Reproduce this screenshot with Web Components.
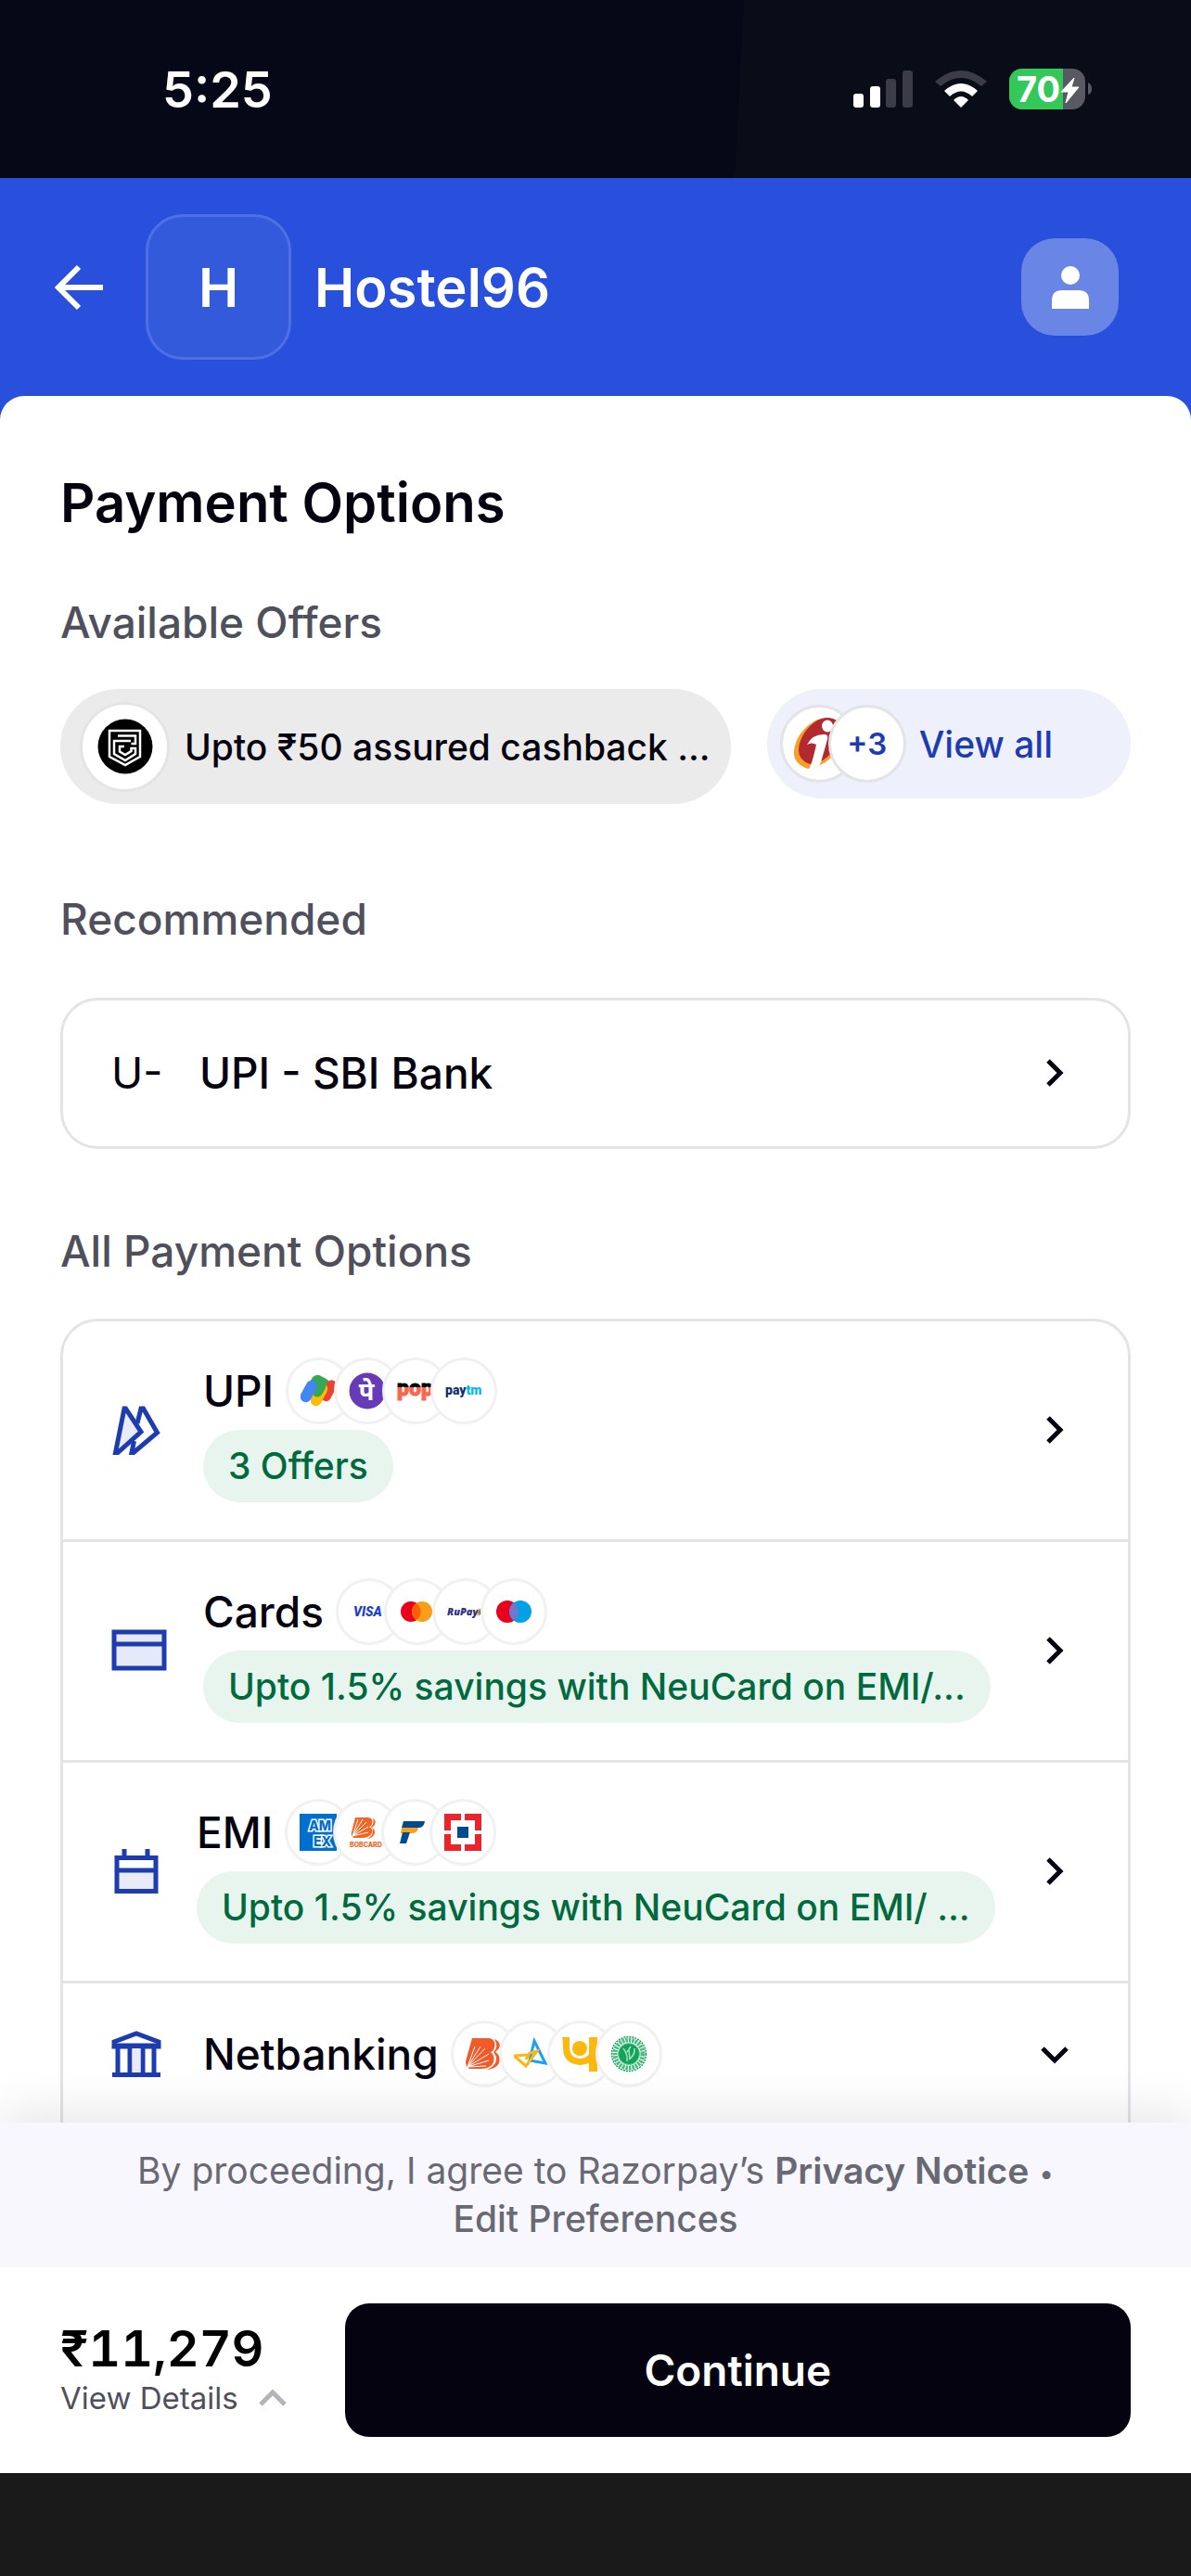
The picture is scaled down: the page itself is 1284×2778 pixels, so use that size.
<!DOCTYPE html>
<html lang="en">
<head>
<meta charset="utf-8">
<meta name="viewport" content="width=device-width, initial-scale=1">
<title>Hostel96 - Payment Options</title>
<style>
  :root {
    --text-title: 58px;
    --text-label: 46px;
    --text-body: 39px;
    --text-small: 33px;
    --gutter: 65px;
    --ink: #05030f;
    --muted: #50505c;
    --line: #e4e4e6;
    --blue: #1d3cb0;
    --brand: #2950dc;
  }
  body {
    margin: 0;
    font-family: Inter, "Liberation Sans", sans-serif;
    color: var(--ink);
  }
</style>
</head>
<body>
<checkout-page>
  <status-bar slot="top">5:25</status-bar>
  <merchant-header slot="top" initial="H">Hostel96</merchant-header>

  <section-block heading="Available Offers">
    <offer-row></offer-row>
  </section-block>

  <section-block class="recommended" heading="Recommended">
    <option-list>
      <payment-option class="compact" name="UPI - SBI Bank">
        <span slot="icon">U-</span>
      </payment-option>
    </option-list>
  </section-block>

  <section-block class="all" heading="All Payment Options">
    <option-list>
      <payment-option name="UPI" offer="3 Offers" brands="gpay phonepe pop paytm">
        <svg-icon slot="icon" name="upi"></svg-icon>
      </payment-option>
      <payment-option name="Cards" offer="Upto 1.5% savings with NeuCard on EMI/..." brands="visa mastercard rupay maestro">
        <svg-icon slot="icon" name="card"></svg-icon>
      </payment-option>
      <payment-option class="narrow" name="EMI" offer="Upto 1.5% savings with NeuCard on EMI/ ..." brands="amex bobcard federal hdfc">
        <svg-icon slot="icon" name="calendar"></svg-icon>
      </payment-option>
      <payment-option name="Netbanking" brands="bob airtel pnb seal" expandable>
        <svg-icon slot="icon" name="bank"></svg-icon>
      </payment-option>
    </option-list>
  </section-block>

  <consent-note slot="bottom"></consent-note>
  <pay-footer slot="bottom" amount="₹11,279">Continue</pay-footer>
</checkout-page>

<script>
// Every icon: [width, height, svg content]
const icons = {
  signal: [64, 40, `
    <rect x="0" y="25" width="11" height="15" rx="3" fill="#fff"/>
    <rect x="18" y="17" width="11" height="23" rx="3" fill="#fff"/>
    <rect x="35" y="9" width="11" height="31" rx="3" fill="#3b3c48"/>
    <rect x="53" y="0" width="11" height="40" rx="3" fill="#3b3c48"/>`],
  wifi: [56, 40, `
    <path d="M0 12Q28 -12 56 12L50 17Q28 -1 6 17Z" fill="#3b3c48"/>
    <path d="M10 22Q28 6 46 22L40 28Q28 17 16 28Z" fill="#fff"/>
    <path d="M20 32Q28 24 36 32L28 40Z" fill="#fff"/>`],
  battery: [90, 44, `
    <clipPath id="cell"><rect width="82" height="44" rx="14"/></clipPath>
    <g clip-path="url(#cell)"><rect width="82" height="44" fill="#585963"/><rect width="58" height="44" fill="#34c759"/></g>
    <path d="M85 15Q89 17 89 22T85 28Z" fill="#585963"/>
    <text x="8" y="36" font-family="Inter, sans-serif" font-weight="700" font-size="38" fill="#fff">70</text>
    <path d="M70 10L56 25H64L61 37L75 20H67Z" fill="#fff" stroke="#fff"/>`],
  back: [54, 52, `<path d="M53 26H6M27 4L5 26L27 48" fill="none" stroke="#fff" stroke-width="6"/>`],
  user: [40, 48, `<circle cx="20" cy="11" r="10" fill="#fff"/><path d="M0 47V38Q0 27 11 27H29Q40 27 40 38V47Z" fill="#fff"/>`],
  right: [48, 48, `<path d="M17 11L30 24L17 37" fill="none" stroke="#05030f" stroke-width="5"/>`],
  down: [48, 48, `<path d="M11 18L24 31L37 18" fill="none" stroke="#05030f" stroke-width="5"/>`],
  up: [30, 20, `<path d="M2 17L15 4L28 17" fill="none" stroke="#b4b4b8" stroke-width="5"/>`],
  upi: [54, 54, `
    <path d="M28 20L32 4H34.500L49.500 30L24 51.500H22L24.500 39" fill="none" stroke="#1d3cb0" stroke-width="5"/>
    <path d="M14 4H15.500L32 29L7 51.500H4.500Z" fill="#e9ebf8" stroke="#1d3cb0" stroke-width="5"/>`],
  card: [60, 46, `<rect x="3" y="3" width="54" height="39" fill="#e6e9f7" stroke="#1d3cb0" stroke-width="5"/><path d="M3 16H57" stroke="#1d3cb0" stroke-width="5"/>`],
  calendar: [54, 54, `
    <path d="M6 26H48V48H6Z" fill="#e9ebf8"/>
    <path d="M6 12.500H48V48.500H6ZM6 26H48M14 3V12M39 3V12" fill="none" stroke="#1d3cb0" stroke-width="5"/>`],
  bank: [54, 52, `
    <path d="M3 18V13L27 4L51 13V18Z" fill="#fff" stroke="#1d3cb0" stroke-width="5"/>
    <path d="M1 17H53M1 48.500H53" stroke="#1d3cb0" stroke-width="5"/>
    <path d="M7 18V47M20 18V47M34 18V47M46 18V47" stroke="#1d3cb0" stroke-width="5"/>
    <path d="M22.500 20H31.500V46H22.500Z" fill="#e9ebf8"/>`],

  cred: [60, 60, `
    <circle cx="30" cy="30" r="29.500" fill="#000"/>
    <g fill="none" stroke="#fff" stroke-width="2.500">
      <path d="M13 13H46V41L30 50L13 41Z"/>
      <path d="M22 18.500H41V27H36.500"/>
      <path d="M36 24H18V38L30 45L41 38V32H36.500V35L30 39L24 35.500V30H29"/>
    </g>`],
  icici: [60, 60, `
    <path d="M38 2C20 3 3 22 3 40Q3 52 18 57L31 53Q44 48 49 34L50 8Q46 2 38 2Z" fill="#f99d27"/>
    <path d="M38 2C23 3 8 22 8 37Q8 48 20 52L34 48Q44 42 52 26L50 6Q46 2 38 2Z" fill="#b02a30"/>
    <ellipse cx="39" cy="11" rx="6" ry="6.500" fill="#fff"/>
    <path d="M17 31Q23 19 37 20Q41 21 38 29L32 50Q30 56 19 58Q23 50 27 31Q22 28 17 31Z" fill="#fff"/>`],

  gpay: [40, 40, `
    <rect x="10" y="4" width="21" height="18" rx="7" transform="rotate(28 20 13)" fill="#34a853"/>
    <rect x="25" y="8" width="11" height="24" rx="5" transform="rotate(28 31 20)" fill="#ea4335"/>
    <rect x="14" y="11" width="12" height="26" rx="6" transform="rotate(28 20 24)" fill="#fbbc04"/>
    <rect x="14" y="8" width="12" height="19" rx="6" transform="rotate(28 20 17)" fill="#34a853"/>
    <rect x="3" y="8" width="12" height="25" rx="6" transform="rotate(28 9 20)" fill="#4285f4"/>`],
  phonepe: [40, 40, `
    <circle cx="20" cy="20" r="19.500" fill="#673ab7"/>
    <text x="19" y="30" text-anchor="middle" font-family="Noto Sans, sans-serif" font-weight="700" font-size="27" fill="#fff">पे</text>`],
  pop: [40, 40, `
    <linearGradient id="two" gradientUnits="userSpaceOnUse" x1="0" y1="0" x2="0" y2="40"><stop offset=".4" stop-color="#000"/><stop offset=".4" stop-color="#f9654f"/></linearGradient>
    <text x="0" y="25" font-family="Roboto, sans-serif" font-weight="900" font-size="23" fill="url(#two)" stroke="url(#two)" stroke-width="1">pop</text>`],
  paytm: [40, 40, `<text x="0" y="24" font-family="Roboto, sans-serif" font-weight="900" font-size="14" fill="#0f2f70">pay<tspan fill="#00b9f5">tm</tspan></text>`],
  visa: [40, 40, `<text x="3" y="25" font-family="Roboto, sans-serif" font-weight="900" font-style="italic" font-size="14" fill="#1d3fd1">VISA</text>`],
  mastercard: [40, 40, `
    <circle cx="13" cy="20" r="11" fill="#eb001b"/><circle cx="25" cy="20" r="11" fill="#f79e1b"/>
    <path d="M19 11A11 11 0 0 1 19 29A11 11 0 0 1 19 11Z" fill="#ff5f00"/>`],
  rupay: [40, 40, `
    <text x="0" y="24" font-family="Open Sans, sans-serif" font-weight="800" font-style="italic" font-size="11" fill="#302f80">RuPay</text>
    <path d="M34 16L36 20L32 25Z" fill="#f47b20"/><path d="M36 16L38 20L34 25Z" fill="#00854a"/>`],
  maestro: [40, 40, `
    <circle cx="13" cy="20" r="12" fill="#eb001b"/><circle cx="27" cy="20" r="12" fill="#00a2e5"/>
    <path d="M20 10.300A12 12 0 0 1 20 29.700A12 12 0 0 1 20 10.300Z" fill="#7375cf"/>`],
  amex: [40, 40, `
    <rect width="40" height="40" fill="#016fd0"/>
    <g font-family="Inter, sans-serif" font-weight="800" font-size="14" fill="#016fd0" stroke="#fff" stroke-width="3" paint-order="stroke"><text x="10" y="18">AM</text><text x="15" y="35">EX</text></g>`],
  bobcard: [40, 40, `
    <path d="M8 4H22Q28 5 26 11Q25 14 23 14Q28 17 26 21Q23 26 15 26H7Q3 25 4 20Z" fill="#f26522"/>
    <path d="M27 5Q31 7 29 12L26 15Q31 18 28 23Q26 26 21 27Q28 23 27 17L25 14Q29 10 27 5Z" fill="#f26522"/>
    <path d="M5 24L11 6M5 24L16 6M5 24L20 9M5 24L22 14M5 24L22 20" stroke="#fff" stroke-width="1"/>
    <text x="2" y="36" font-family="Inter, sans-serif" font-weight="800" font-size="7" fill="#f26522">BOBCARD</text>`],
  federal: [40, 40, `
    <path d="M8 8H31Q30 15 25 15H6Z" fill="#004b8d"/>
    <path d="M6 15H24Q23 21 17 21H5Z" fill="#faa21b"/>
    <path d="M7 20H15L11 32H4Z" fill="#004b8d"/>`],
  hdfc: [40, 40, `
    <rect width="40" height="40" fill="#ed232a"/><rect x="7" y="7" width="26" height="26" fill="#fff"/>
    <path d="M20 0V40M0 20H40" stroke="#fff" stroke-width="4"/>
    <rect x="14" y="14" width="12" height="12" fill="#004c8f"/>`],
  bob: [40, 40, `
    <path d="M7 3H26Q33 5 31 13Q30 17 27 18Q32 22 30 29Q27 36 17 36H4Q0 34 0 28Z" fill="#f15a29"/>
    <path d="M31 4Q39 7 36 14L32 18Q39 22 36 30Q32 37 22 37Q34 33 33 23L30 18Q36 12 31 4Z" fill="#f15a29"/>
    <path d="M2 34L10 12M2 34L16 12M2 34L21 14M2 34L25 20M2 34L25 27M2 34L22 33" stroke="#fff" stroke-width="1"/>`],
  airtel: [40, 40, `
    <path d="M22 6L34 30L17 27Z" fill="none" stroke="#1ba1f2" stroke-width="3"/>
    <path d="M15 21L0 22L13 33L25 17L17 19L13 26" fill="none" stroke="#fbb615" stroke-width="3"/>`],
  pnb: [40, 40, `
    <circle cx="19" cy="14" r="8" fill="#fbb90f"/>
    <path d="M0 2H8V14Q9 25 19 25Q26 25 29 20V2H38V39H29V30Q24 32 19 32Q1 30 1 14Q1 5 0 2Z" fill="#fbb90f"/>`],
  seal: [40, 40, `
    <circle cx="20" cy="20" r="18.500" fill="none" stroke="#12a45a" stroke-width="1.500" stroke-dasharray="2 1"/>
    <circle cx="20" cy="20" r="15" fill="none" stroke="#4dba82" stroke-width="5" stroke-dasharray="2.500 1"/>
    <circle cx="20" cy="20" r="11.500" fill="#12a45a" stroke="#7acca0" stroke-width="1"/>
    <path d="M14 14Q19 20 18 28M18 18L22 12M20 26Q27 21 26 14M20 16L21 26" fill="none" stroke="#a8e0c4" stroke-width="1.500"/>`],
};

/** Shared base: clones the class's markup into an open shadow root */
class BaseElement extends HTMLElement {
  connectedCallback() {
    const template = document.createElement("template");
    template.innerHTML = `<style>* { box-sizing: border-box; } ${this.css()}</style>${this.html()}`;
    this.attachShadow({ mode: "open" });
    this.shadowRoot.appendChild(template.content.cloneNode(true));
  }
}

class SvgIcon extends BaseElement {
  css() {
    return `:host { display: inline-flex; flex: none; } svg { display: block; }`;
  }
  html() {
    const [w, h, body] = icons[this.getAttribute("name")];
    return `<svg width="${w}" height="${h}" viewBox="0 0 ${w} ${h}" aria-hidden="true">${body}</svg>`;
  }
}

class CheckoutPage extends BaseElement {
  css() {
    return `
      :host { display: flex; flex-direction: column; height: 100vh; background: #1a1a1a; }
      .top { background: var(--brand); flex: none; }
      .sheet-wrap { background: linear-gradient(var(--brand) 50px, #fff 50px); flex: 1; min-height: 0; overflow: hidden; }
      main { background: #fff; border-radius: 26px 26px 0 0; padding: 79px var(--gutter) 0; }
      h1 { margin: 0 0 65px; font-size: var(--text-title); line-height: 72px; font-weight: 600; }
      .bottom { flex: none; position: relative; margin-bottom: 111px; }`;
  }
  html() {
    return `
      <div class="top"><slot name="top"></slot></div>
      <div class="sheet-wrap"><main><h1>Payment Options</h1><slot></slot></main></div>
      <div class="bottom"><slot name="bottom"></slot></div>`;
  }
}

class StatusBar extends BaseElement {
  css() {
    return `
      :host {
        display: flex; align-items: center; justify-content: space-between;
        height: 192px; padding: 0 106px 0 175px; box-sizing: border-box;
        background: linear-gradient(93deg, #050817 62%, #080d17 62%);
        color: #fff; font-size: 54px; font-weight: 600;
      }
      .icons { display: flex; align-items: center; gap: 24px; }`;
  }
  html() {
    return `<slot></slot><div class="icons"><svg-icon name="signal"></svg-icon><svg-icon name="wifi"></svg-icon><svg-icon name="battery"></svg-icon></div>`;
  }
}

class MerchantHeader extends BaseElement {
  css() {
    return `
      :host {
        display: flex; align-items: center; height: 235px; padding: 0 78px 0 58px;
        box-sizing: border-box; color: #fff; font-size: var(--text-title); font-weight: 600;
      }
      button { border: 0; padding: 0; background: none; display: grid; place-items: center; }
      .logo {
        display: grid; place-items: center; width: 157px; height: 157px; margin: 0 25px 0 45px;
        border: 3px solid #4f70e2; border-radius: 40px; background: #345adc;
      }
      .name { flex: 1; }
      .user { width: 105px; height: 105px; border-radius: 36px; background: #6985e6; }`;
  }
  html() {
    return `
      <button aria-label="Back"><svg-icon name="back"></svg-icon></button>
      <div class="logo">${this.getAttribute("initial")}</div>
      <div class="name"><slot></slot></div>
      <button class="user" aria-label="Account"><svg-icon name="user"></svg-icon></button>`;
  }
}

class SectionBlock extends BaseElement {
  css() {
    return `
      :host { display: block; }
      :host(.recommended) { margin: 96px 0 82px; --heading-gap: 57px; }
      :host(.all) { --heading-gap: 45px; }
      h2 { margin: 0 0 var(--heading-gap, 44px); font-size: var(--text-label); line-height: 56px; font-weight: 500; color: var(--muted); }`;
  }
  html() {
    return `<h2>${this.getAttribute("heading")}</h2><slot></slot>`;
  }
}

class OfferRow extends BaseElement {
  css() {
    return `
      :host { display: flex; align-items: flex-start; gap: 39px; }
      button {
        display: flex; align-items: center; border: 0; border-radius: 62px;
        font: inherit; font-size: var(--text-body); color: var(--ink); text-align: left; white-space: nowrap;
      }
      .offer { flex: 1; gap: 16px; height: 124px; padding: 0 21px; background: #ebebeb; font-weight: 450; }
      .all { height: 118px; padding: 0 84px 0 14px; background: #eef0fb; color: var(--blue); font-weight: 500; }
      .disc {
        display: grid; place-items: center; flex: none; width: 84px; height: 84px;
        border: 3px solid #e4e4e6; border-radius: 50%; background: #fff;
      }
      .offer .disc { width: 97px; height: 97px; }
      .more { margin: 0 14px 0 -32px; font-size: var(--text-small); font-weight: 600; }`;
  }
  html() {
    return `
      <button class="offer"><span class="disc"><svg-icon name="cred"></svg-icon></span>Upto ₹50 assured cashback ...</button>
      <button class="all"><span class="disc"><svg-icon name="icici"></svg-icon></span><span class="disc more">+3</span>View all</button>`;
  }
}

class OptionList extends BaseElement {
  css() {
    return `
      :host { display: block; border: 3px solid var(--line); border-radius: 40px; overflow: hidden; }
      ::slotted(:not(:last-child)) { border-bottom: 3px solid var(--line); }`;
  }
  html() {
    return `<slot></slot>`;
  }
}

class BrandStack extends BaseElement {
  css() {
    return `
      :host { display: flex; }
      span {
        display: grid; place-items: center; width: 72px; height: 72px;
        border: 3px solid #f1f1f2; border-radius: 50%; background: #fff;
      }
      span + span { margin-left: -20px; }`;
  }
  html() {
    return this.getAttribute("names").split(" ").map((name) => `<span><svg-icon name="${name}"></svg-icon></span>`).join("");
  }
}

class PaymentOption extends BaseElement {
  css() {
    return `
      :host { display: block; --icon-col: 99px; }
      :host(.compact) { --icon-col: 95px; }
      :host(.narrow) { --icon-col: 92px; }
      button {
        display: grid; grid-template-columns: var(--icon-col) 1fr 48px; align-items: center;
        width: 100%; padding: 39px 55px 40px 52px; border: 0; background: none;
        font: inherit; font-size: var(--text-label); color: var(--ink); text-align: left;
      }
      :host(.compact) button { height: 157px; }
      :host([expandable]) button { padding: 40px 55px 80px 52px; }
      .name { display: flex; align-items: center; gap: 13px; height: 72px; font-weight: 500; }
      .offer {
        display: inline-block; margin-top: 6px; padding: 0 27px; border-radius: 39px; background: #e8f5ee;
        color: #00693e; font-size: var(--text-body); line-height: 78px; font-weight: 500; white-space: nowrap;
      }`;
  }
  html() {
    const offer = this.getAttribute("offer");
    const brands = this.getAttribute("brands");
    return `
      <button>
        <slot name="icon"></slot>
        <span>
          <span class="name">${this.getAttribute("name")}${brands ? `<brand-stack names="${brands}"></brand-stack>` : ""}</span>
          ${offer ? `<span class="offer">${offer}</span>` : ""}
        </span>
        <svg-icon name="${this.hasAttribute("expandable") ? "down" : "right"}"></svg-icon>
      </button>`;
  }
}

class ConsentNote extends BaseElement {
  css() {
    return `
      :host {
        display: block; padding: 26px 130px; background: #f7f7fd; text-align: center;
        font-size: var(--text-body); line-height: 52px; color: #696974;
        box-shadow: 0 -8px 56px 0 rgba(0, 0, 0, .11);
      }
      a { color: inherit; text-decoration: none; font-weight: 500; white-space: nowrap; }
      a.notice { font-weight: 600; }
      small { font-size: 28px; line-height: 1; vertical-align: middle; }`;
  }
  html() {
    return `By proceeding, I agree to Razorpay’s <a class="notice" href="#privacy">Privacy Notice</a> <small>•</small> <a href="#preferences">Edit Preferences</a>`;
  }
}

class PayFooter extends BaseElement {
  css() {
    return `
      :host { display: flex; align-items: center; gap: 63px; padding: 39px var(--gutter); position: relative; background: #fff; }
      .amount { font-size: 54px; line-height: 60px; font-weight: 600; font-variant-numeric: tabular-nums; color: #000; }
      button { border: 0; padding: 0; font: inherit; }
      .details { display: flex; align-items: center; gap: 22px; background: none; font-size: var(--text-small); line-height: 46px; color: var(--muted); }
      .pay { flex: 1; height: 144px; border-radius: 26px; background: var(--ink); color: #fff; font-size: var(--text-label); font-weight: 600; }`;
  }
  html() {
    return `
      <div>
        <div class="amount">${this.getAttribute("amount")}</div>
        <button class="details">View Details <svg-icon name="up"></svg-icon></button>
      </div>
      <button class="pay"><slot></slot></button>`;
  }
}

customElements.define("svg-icon", SvgIcon);
customElements.define("brand-stack", BrandStack);
customElements.define("status-bar", StatusBar);
customElements.define("merchant-header", MerchantHeader);
customElements.define("offer-row", OfferRow);
customElements.define("payment-option", PaymentOption);
customElements.define("option-list", OptionList);
customElements.define("section-block", SectionBlock);
customElements.define("consent-note", ConsentNote);
customElements.define("pay-footer", PayFooter);
customElements.define("checkout-page", CheckoutPage);
</script>
</body>
</html>
